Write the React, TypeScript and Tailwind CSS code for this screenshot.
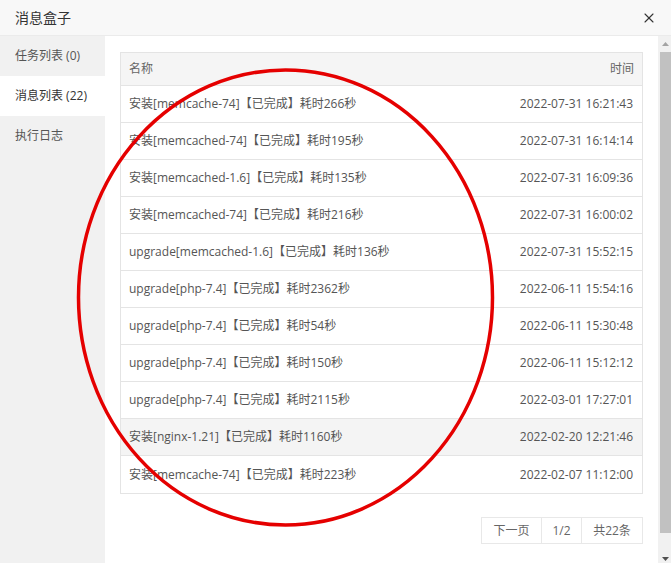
import { X } from "lucide-react";

const rows = [
  { name: "安装[memcache-74]【已完成】耗时266秒", time: "2022-07-31 16:21:43" },
  { name: "安装[memcached-74]【已完成】耗时195秒", time: "2022-07-31 16:14:14" },
  { name: "安装[memcached-1.6]【已完成】耗时135秒", time: "2022-07-31 16:09:36" },
  { name: "安装[memcached-74]【已完成】耗时216秒", time: "2022-07-31 16:00:02" },
  { name: "upgrade[memcached-1.6]【已完成】耗时136秒", time: "2022-07-31 15:52:15" },
  { name: "upgrade[php-7.4]【已完成】耗时2362秒", time: "2022-06-11 15:54:16" },
  { name: "upgrade[php-7.4]【已完成】耗时54秒", time: "2022-06-11 15:30:48" },
  { name: "upgrade[php-7.4]【已完成】耗时150秒", time: "2022-06-11 15:12:12" },
  { name: "upgrade[php-7.4]【已完成】耗时2115秒", time: "2022-03-01 17:27:01" },
  { name: "安装[nginx-1.21]【已完成】耗时1160秒", time: "2022-02-20 12:21:46", hover: true },
  { name: "安装[memcache-74]【已完成】耗时223秒", time: "2022-02-07 11:12:00" },
];

const tabs = [
  { label: "任务列表 (0)", active: false },
  { label: "消息列表 (22)", active: true },
  { label: "执行日志", active: false },
];

export default function App() {
  return (
    <div className="relative w-[671px] h-[563px] overflow-hidden bg-white font-['Open_Sans','Noto_Sans_CJK_SC',sans-serif]">
      <div className="h-[36px] flex items-center justify-between pl-[15px] pr-[14px] bg-[#f8f8f8] border-b border-[#ebebeb]">
        <span className="text-[14px] text-[#333]">消息盒子</span>
        <X className="w-[16px] h-[16px] text-[#333]" strokeWidth={1.6} />
      </div>
      <div className="flex h-[527px]">
        <div className="w-[105px] bg-[#f1f1f1]">
          {tabs.map((t) => (
            <div key={t.label} className={`h-[40px] flex items-center pl-[15px] text-[12px] ${t.active ? "bg-white text-[#333]" : "text-[#555]"}`}>
              {t.label}
            </div>
          ))}
        </div>
        <div className="flex-1 pl-[15px] pr-[15px] pt-[16px]">
          <div className="border border-[#e4e4e4] text-[12px]">
            <div className="h-[33px] flex items-center justify-between px-[8px] bg-[#f5f5f5] border-b border-[#e4e4e4] text-[#666]">
              <span>名称</span>
              <span>时间</span>
            </div>
            {rows.map((r, i) => (
              <div key={i} className={`h-[37px] flex items-center justify-between pl-[8px] pr-[9px] text-[#555] ${i < rows.length - 1 ? "border-b border-[#e4e4e4]" : ""} ${r.hover ? "bg-[#f4f4f4]" : ""}`}>
                <span>{r.name}</span>
                <span>{r.time}</span>
              </div>
            ))}
          </div>
          <div className="flex justify-end mt-[23px]">
            <div className="flex h-[27px] border border-[#e8e8e8] text-[12px] text-[#666]">
              <div className="w-[60px] flex items-center justify-center border-r border-[#e8e8e8]">下一页</div>
              <div className="w-[40px] flex items-center justify-center border-r border-[#e8e8e8]">1/2</div>
              <div className="w-[60px] flex items-center justify-center">共22条</div>
            </div>
          </div>
        </div>
        <div className="w-[13px] flex flex-col bg-[#f1f1f1]">
          <div className="h-[16px] flex items-center justify-center pl-[2px]">
            <svg width="7" height="4" viewBox="0 0 7 4"><path d="M0 4 L3.5 0 L7 4 Z" fill="#a3a3a3" /></svg>
          </div>
          <div className="h-[481px] ml-[2px] bg-[#c1c1c1]" />
          <div className="flex-1 flex items-end justify-center pl-[2px] pb-[2px]">
            <svg width="7" height="4" viewBox="0 0 7 4"><path d="M0 0 L3.5 4 L7 0 Z" fill="#505050" /></svg>
          </div>
        </div>
      </div>
      <svg className="absolute inset-0 pointer-events-none" width="671" height="563">
        <ellipse cx="285.5" cy="297.5" rx="207" ry="227.5" fill="none" stroke="#e50000" strokeWidth="3.5" />
      </svg>
    </div>
  );
}
